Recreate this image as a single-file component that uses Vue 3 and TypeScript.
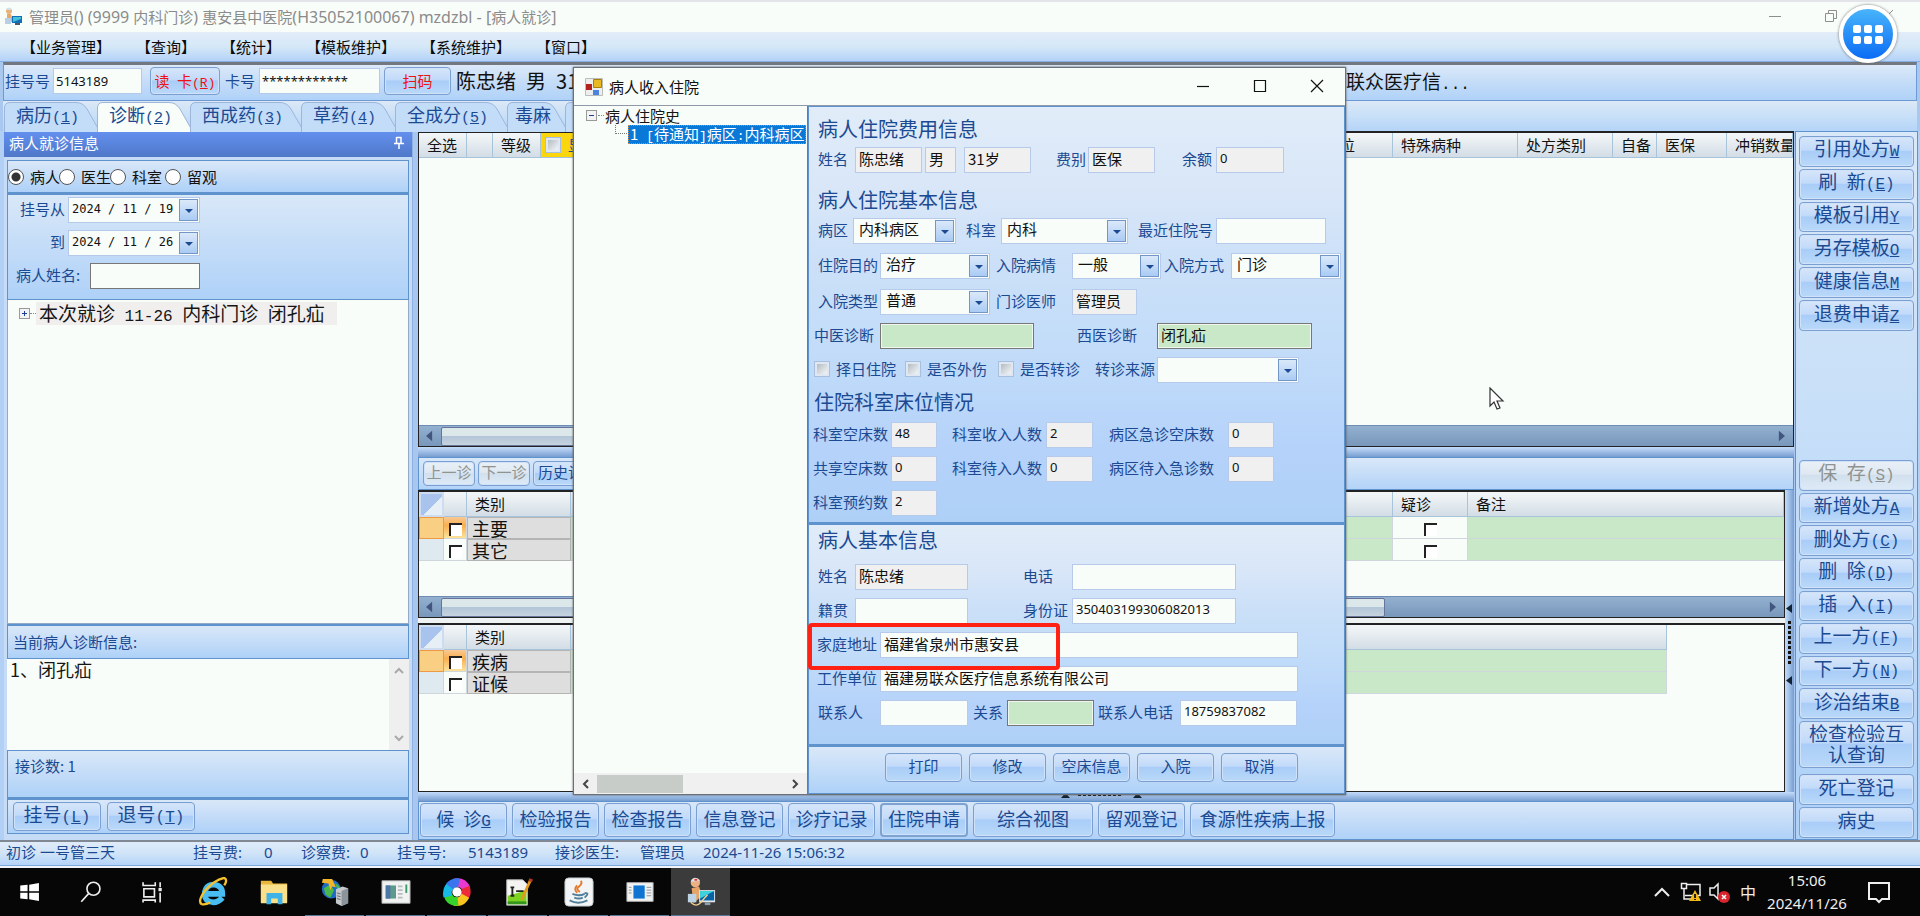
<script setup lang="ts">
import { ref } from 'vue'

interface KeyLabel { text: string; key?: string; paren?: boolean; disabled?: boolean; wide?: string }

const menus = ['业务管理', '查询', '统计', '模板维护', '系统维护', '窗口']

const tabs = [
  { text: '病历', key: '1', w: 98 },
  { text: '诊断', key: '2', w: 98 },
  { text: '西成药', key: '3', w: 116 },
  { text: '草药', key: '4', w: 99 },
  { text: '全成分', key: '5', w: 117 },
  { text: '毒麻', key: '', w: 63 },
  { text: '', key: '', w: 98 },
]
const activeTab = ref(1)
const tabPath = (w: number) =>
  `M0.5 31V7Q0.5 1.5 6 1.5H${w - 26}Q${w - 19} 1.5 ${w - 15} 8L${w - 2} 31`

const scopes = ['病人', '医生', '科室', '留观']
const scope = ref('病人')

const topActions: KeyLabel[] = [
  { text: '引用处方', key: 'W' },
  { text: '刷\u2002新', key: 'E', paren: true },
  { text: '模板引用', key: 'Y' },
  { text: '另存模板', key: 'O' },
  { text: '健康信息', key: 'M' },
  { text: '退费申请', key: 'Z' },
]
const midActions: KeyLabel[] = [
  { text: '保\u2002存', key: 'S', paren: true, disabled: true },
  { text: '新增处方', key: 'A' },
  { text: '删处方', key: 'C', paren: true },
  { text: '删\u2002除', key: 'D', paren: true },
  { text: '插\u2002入', key: 'I', paren: true },
  { text: '上一方', key: 'F', paren: true },
  { text: '下一方', key: 'N', paren: true },
  { text: '诊治结束', key: 'B' },
]
const bottomActions: KeyLabel[] = [
  { text: '候\u2002诊', key: 'G' },
  { text: '检验报告' },
  { text: '检查报告' },
  { text: '信息登记' },
  { text: '诊疗记录' },
  { text: '住院申请', wide: 'pressed' },
  { text: '综合视图', wide: 'w-mid' },
  { text: '留观登记' },
  { text: '食源性疾病上报', wide: 'w-long' },
]
const diagRows = ['主要', '其它']
const tcmRows = ['疾病', '证候']
const dialogActions = ['打印', '修改', '空床信息', '入院', '取消']
</script>

<template>
  <div class="screen">
    <header class="titlebar">
      <svg class="app-icon" viewBox="0 0 20 20" aria-hidden="true">
        <circle cx="6" cy="4" r="3" fill="#e9b27a" /><path d="M3 3Q6-2 9 3z" fill="#cfe0ee" />
        <path d="M4 7h4l2 7-6 3z" fill="#e8a868" /><path d="M2 11h6v6H2z" fill="#b9cfe4" />
        <path d="M9 9h10v7H9z" fill="#0f6fb8" /><path d="M10 10h8v2l-8 3z" fill="#45c0d8" /><path d="M12 16h5v2h-5z" fill="#4a5a68" />
      </svg>
      <h1>管理员<span>() (9999 </span>内科门诊<span>) </span>惠安县中医院<span>(H35052100067) mzdzbl - [</span>病人就诊<span>]</span></h1>
      <div class="win-btns">
        <button aria-label="最小化"><svg viewBox="0 0 14 14"><path d="M1 7.500h12" /></svg></button>
        <button aria-label="还原"><svg viewBox="0 0 14 14"><path d="M1.500 4.500h8v8h-8zM4.500 4V1.500h8v8H10" /></svg></button>
        <button aria-label="关闭"><svg viewBox="0 0 14 14"><path d="M1 1l12 12M13 1L1 13" /></svg></button>
      </div>
    </header>

    <nav class="menubar">
      <button v-for="m in menus" :key="m">【{{ m }}】</button>
    </nav>

    <section class="patient-bar">
      <label for="regno">挂号号</label>
      <input id="regno" class="num regno" value="5143189" />
      <button class="btn red read">读&ensp;卡<span class="k">(<u>R</u>)</span></button>
      <label for="cardno">卡号</label>
      <input id="cardno" class="num cardno" value="************" />
      <button class="btn red scan">扫码</button>
      <span class="pt-name">陈忠绪&ensp;男&ensp;31岁</span>
      <span class="pt-org">联众医疗信<span class="k">...</span></span>
    </section>

    <div class="tabbar" role="tablist">
      <button v-for="(t, i) in tabs" :key="i" role="tab" :aria-selected="activeTab === i"
        :class="['tab', { on: activeTab === i }]" :style="{ width: t.w + 'px' }" @click="activeTab = i">
        <svg :width="t.w" height="31" aria-hidden="true"><path :d="tabPath(t.w)" /></svg>
        <span>{{ t.text }}<span v-if="t.key" class="k">(<u>{{ t.key }}</u>)</span></span>
      </button>
    </div>

    <main class="work">
      <aside class="dock">
        <div class="dock-head"><span>病人就诊信息</span>
          <svg viewBox="0 0 10 14" aria-hidden="true"><path d="M2.500 1v6M7 1v6M2.500 1.500h5M0 7.500h10M5 8v5" /></svg>
        </div>
        <div class="dock-body">
          <div class="scope pane">
            <label v-for="s in scopes" :key="s"><input v-model="scope" type="radio" name="scope" :value="s" /> {{ s }}</label>
          </div>
          <div class="filter pane">
            <label for="d1">挂号从</label><span class="date"><input id="d1" value="2024 / 11 / 19" /><button aria-label="选择日期" class="drop"></button></span>
            <label for="d2">到</label><span class="date"><input id="d2" value="2024 / 11 / 26" /><button aria-label="选择日期" class="drop"></button></span>
            <label for="pname">病人姓名:</label><input id="pname" class="pname" />
          </div>
          <div class="tree">
            <div class="node"><i class="twist plus"></i><i class="dots"></i><span class="node-text">本次就诊<span class="k">&nbsp;11-26&nbsp;</span>内科门诊<span class="k">&nbsp;</span>闭孔疝</span></div>
          </div>
          <label class="pane diag-label" for="diag">当前病人诊断信息:</label>
          <div class="diag-box">
            <textarea id="diag">1、闭孔疝</textarea>
            <div class="vbar"><svg viewBox="0 0 10 8"><path d="M1 6l4-4 4 4" /></svg><svg viewBox="0 0 10 8"><path d="M1 2l4 4 4-4" /></svg></div>
          </div>
          <div class="pane count">接诊数: 1</div>
          <div class="pane dock-btns">
            <button class="btn">挂号<span class="k">(<u>L</u>)</span></button>
            <button class="btn">退号<span class="k">(<u>T</u>)</span></button>
          </div>
        </div>
      </aside>

      <section class="center">
        <div class="grid1 grid-box">
          <table>
            <colgroup><col class="c48" /><col class="c26" /><col class="c48" /><col class="c100" /><col /><col class="c61" /><col class="c125" /><col class="c95" /><col class="c44" /><col class="c70" /><col class="c66" /></colgroup>
            <thead><tr><th>全选</th><th></th><th>等级</th><th class="yellow"><label><input type="checkbox" class="soft" />显示</label></th><th></th><th>位</th><th>特殊病种</th><th>处方类别</th><th>自备</th><th>医保</th><th>冲销数量</th></tr></thead>
          </table>
          <div class="fill"></div>
          <div class="hbar"><svg class="arr" viewBox="0 0 8 12"><path d="M7 0v12L0 6z" /></svg><i class="thumb t1"></i><b></b><svg class="arr" viewBox="0 0 8 12"><path d="M1 0v12l7-6z" /></svg></div>
        </div>
        <div class="hsplit"></div>
        <div class="toolstrip">
          <button class="btn small" disabled>上一诊</button>
          <button class="btn small" disabled>下一诊</button>
          <button class="btn small hist">历史诊断</button>
        </div>
        <div class="lower">
          <div class="stack">
            <div class="grid2 grid-box">
              <table>
                <colgroup><col class="c25" /><col class="c23" /><col class="c104" /><col /><col class="c75" /><col class="c316" /></colgroup>
                <thead><tr><th class="corner"></th><th></th><th>类别</th><th></th><th>疑诊</th><th>备注</th></tr></thead>
                <tbody>
                  <tr v-for="(r, i) in diagRows" :key="r" :class="{ cur: i === 0 }">
                    <td class="ind"></td><td class="ck"><input type="checkbox" class="sunk" :aria-label="r" /></td>
                    <td class="cat">{{ r }}</td><td class="green"></td>
                    <td class="mid"><input type="checkbox" class="sunk" aria-label="疑诊" /></td><td class="green"></td>
                  </tr>
                </tbody>
              </table>
              <div class="fill"></div>
              <div class="hbar"><svg class="arr" viewBox="0 0 8 12"><path d="M7 0v12L0 6z" /></svg><i class="thumb t2"></i><svg class="arr right" viewBox="0 0 8 12"><path d="M1 0v12l7-6z" /></svg></div>
            </div>
            <div class="grid3 grid-box">
              <table>
                <colgroup><col class="c25" /><col class="c23" /><col class="c104" /><col /></colgroup>
                <thead><tr><th class="corner"></th><th></th><th>类别</th><th></th></tr></thead>
                <tbody>
                  <tr v-for="(r, i) in tcmRows" :key="r" :class="{ cur: i === 0 }">
                    <td class="ind"></td><td class="ck"><input type="checkbox" class="sunk" :aria-label="r" /></td>
                    <td class="cat">{{ r }}</td><td class="green"></td>
                  </tr>
                </tbody>
              </table>
              <div class="fill"></div>
            </div>
          </div>
          <div class="vsplit"><svg viewBox="0 0 8 84"><path d="M7 3v9L1 7.500zM7 75v9L1 79.500z" /><path class="dot" d="M4.500 20v44" /></svg></div>
        </div>
        <div class="hsplit low"><svg viewBox="0 0 84 8"><path d="M3 6h9L7.500 1zM75 6h9L79.500 1z" /><path class="dot" d="M20 2.500h44" /></svg></div>
        <div class="actions">
          <button v-for="a in bottomActions" :key="a.text" :class="['btn', a.wide]">{{ a.text }}<span v-if="a.key" class="k"><u>{{ a.key }}</u></span></button>
        </div>
      </section>

      <aside class="side">
        <div class="side-group six">
          <button v-for="a in topActions" :key="a.text" class="btn">{{ a.text }}<span class="k"><template v-if="a.paren">(</template><u>{{ a.key }}</u><template v-if="a.paren">)</template></span></button>
        </div>
        <div class="side-gap"></div>
        <div class="side-group eight">
          <button v-for="a in midActions" :key="a.text" class="btn" :disabled="a.disabled">{{ a.text }}<span class="k"><template v-if="a.paren">(</template><u>{{ a.key }}</u><template v-if="a.paren">)</template></span></button>
        </div>
        <button class="btn tall">检查检验互认查询</button>
        <button class="btn last">死亡登记</button>
        <button class="btn last">病史</button>
      </aside>
    </main>

    <footer class="status">
      <span class="s1">初诊 一号管三天</span><span class="s2">挂号费:</span><span class="s3">0</span><span class="s4">诊察费:</span><span class="s5">0</span>
      <span class="s6">挂号号:</span><span class="s7">5143189</span><span class="s8">接诊医生:</span><span class="s9">管理员</span><span>2024-11-26 15:06:32</span>
    </footer>

    <div class="taskbar">
      <button class="tb" aria-label="开始"><svg viewBox="0 0 32 32"><path fill="#fff" d="M4 8l9-1v8H4zM15 7l12-2v10H15zM4 17h9v8l-9-1zM15 17h12v10l-12-2z" /></svg></button>
      <button class="tb" aria-label="搜索"><svg viewBox="0 0 32 32"><g fill="none" stroke="#eee" stroke-width="2"><circle cx="19" cy="12" r="8" /><path d="M13 18l-9 10" /></g></svg></button>
      <button class="tb" aria-label="任务视图"><svg viewBox="0 0 32 32"><path fill="none" stroke="#eee" stroke-width="2" d="M5 4v4h15V4M6 12h13v10H6zM5 29v-3h15v3M26 4v6M26 17v12" /><path fill="#eee" d="M24 11h4v4h-4z" /></svg></button>
      <button class="tb" aria-label="Internet Explorer"><svg viewBox="0 0 32 32"><path fill="none" stroke="#49bdf2" stroke-width="6" d="M26 22Q22 27 16 27Q7 26 7 18Q8 8 17 8Q26 9 26 18H10" /><path fill="none" stroke="#f5c22e" stroke-width="2.500" d="M4 29Q-1 26 8 14Q18 3 28 1Q32 3 28 9M4 29q4 1 9-2" /></svg></button>
      <button class="tb" aria-label="文件资源管理器"><svg viewBox="0 0 32 32"><path fill="#e9b53c" d="M2 4h11l2 3h15v20H2z" /><path fill="#fbe08b" d="M2 8h28v20H2z" /><path fill="#3fb2e8" d="M8 17h17v12h-5v-6h-7v6H8z" /></svg></button>
      <button class="tb run" aria-label="网络服务"><svg viewBox="0 0 32 32"><circle cx="12" cy="13" r="10" fill="#1f6bc4" /><path fill="#4cb749" d="M4 12l7-4 4 6-4 8-5-3zM16 6l5 4-2 5z" /><path fill="#f3b52a" d="M3 2h10l4 9-4-1-2 4-2-7-7-1z" /><path fill="#c3c9cd" d="M17 13l7-3 6 2v16l-7 3-6-3z" /><path fill="#8b949b" d="M23 15l7-3v16l-7 3z" /><path stroke="#666" d="M18 17l4 1M18 20l4 1M18 23l4 1" /></svg></button>
      <button class="tb run" aria-label="配置工具"><svg viewBox="0 0 32 32"><path fill="#f1f3f3" stroke="#aaa" d="M1 4h30v24H1z" /><path fill="#5d9a8c" d="M5 9h11v14H5z" /><path fill="#4b78a8" d="M5 9h5v14H5z" /><path stroke="#b8bcc0" stroke-width="2" d="M18 10h5M18 14h5M18 18h5M18 22h5" /><path stroke="#3a9b63" stroke-width="2" d="M27 8v9" /></svg></button>
      <button class="tb run" aria-label="浏览器"><svg viewBox="0 0 32 32"><g fill="none" stroke-width="9"><path stroke="#e83ad0" d="M14 6q9-1 12 7" /><path stroke="#ee2a3a" d="M25 11q3 7-3 12" /><path stroke="#f7c51e" d="M25 20q-4 8-12 6" /><path stroke="#35d32b" d="M17 26q-9 1-11-8" /><path stroke="#17b9e6" d="M6 21Q4 12 12 7" /><path stroke="#3a74ee" d="M8 10q4-5 10-4" /></g><circle cx="16" cy="16" r="5" fill="#fff" /></svg></button>
      <button class="tb run" aria-label="文本编辑"><svg viewBox="0 0 32 32"><path fill="#f4f4f0" stroke="#bbb" d="M4 3h17l5 5v22H4z" /><path fill="#7ed321" d="M5 20l20-6v15H5z" /><path fill="#34961d" d="M5 26h20v3H5z" /><path stroke="#222" stroke-width="2" d="M10 10v10M8 11h4M8 20h4M14 15h8" /><path stroke="#e59b1c" stroke-width="3" d="M29 4l-9 20" /><path stroke="#b83a1e" stroke-width="4" d="M30 2l-1 3" /></svg></button>
      <button class="tb run" aria-label="Java"><svg viewBox="0 0 32 32"><rect x="1" y="1" width="30" height="30" rx="4" fill="#f2f4f5" stroke="#bcc6cc" /><path fill="none" stroke="#e8792b" stroke-width="2" d="M18 4q2 3-2 6t1 6M14 9q-4 4 0 8" /><path fill="none" stroke="#4f7f9c" stroke-width="2" d="M9 18q7 3 13 0M11 22q5 2 9 0M6 25q9 5 19 0M22 17q6 0 0 5" /></svg></button>
      <button class="tb run" aria-label="程序窗口"><svg viewBox="0 0 32 32"><path fill="#f1f3f3" stroke="#aaa" d="M2 6h28v20H2z" /><path fill="#0e75d3" d="M9 9h12v14H9z" /><path stroke="#8a9094" d="M4 11h3M4 14h3M4 17h3M23 11h5M23 14h5M23 17h5M23 20h5" /></svg></button>
      <button class="tb run current" aria-label="病人就诊"><svg viewBox="0 0 32 32"><circle cx="10" cy="6" r="5" fill="#eab184" /><path fill="#d9e7f2" d="M5 5Q9-3 15 4z" /><path fill="#e2372c" d="M9 2h3v2H9z" /><path fill="#e7a468" d="M6 12l8-2 3 10-9 8z" /><path fill="#bcd3e6" d="M2 18h9v9H2z" /><path fill="#dfe6ea" d="M14 14h17v13H14z" /><path fill="#0763a6" d="M15 15h15v10H15z" /><path fill="#3fd1dc" d="M15 15h15L15 23z" /><path fill="#909da6" d="M20 27h6v3h-6z" /><path fill="none" stroke="#f0cf8e" stroke-width="1.500" d="M5 27q6 6 11 0t7-8" /></svg></button>
      <span class="grow"></span>
      <div class="tray">
        <svg class="t-up" viewBox="0 0 16 16"><path d="M1 12l7-7 7 7" fill="none" stroke="#eee" stroke-width="2" /></svg>
        <svg class="t-net" viewBox="0 0 22 22"><path d="M7 3.500h13v11H5M1.500 2.500h5v5h-5zM4 8v10h7" fill="none" stroke="#eee" stroke-width="1.500" /><path d="M15 9l6 11H9z" fill="#f6b91a" /><path d="M15 13v4M15 18v1" stroke="#222" stroke-width="2" /></svg>
        <svg class="t-vol" viewBox="0 0 22 22"><path d="M1 7h4l4-4v15l-4-4H1z" fill="none" stroke="#eee" stroke-width="1.500" /><circle cx="15" cy="16" r="6" fill="#d8242c" /><path d="M13 14l4 4M17 14l-4 4" stroke="#fff" stroke-width="1.500" /></svg>
        <span class="ime">中</span>
        <span class="clock">15:06<br />2024/11/26</span>
        <svg class="t-msg" viewBox="0 0 24 24"><path d="M2 3h20v16h-7l-3 3-3-3H2z" fill="none" stroke="#eee" stroke-width="2" /></svg>
      </div>
    </div>

    <section class="dialog" role="dialog" aria-label="病人收入住院">
      <header class="dlg-title">
        <svg class="dlg-icon" viewBox="0 0 18 18" aria-hidden="true"><path fill="#eee" stroke="#bbb" d="M.5.5h17v17H.5z" /><path fill="#e8b920" stroke="#a8820a" d="M8.500 1.500h8v8h-8z" /><path fill="#b3211c" d="M1 6h6v6H1z" /><path fill="#4a86e0" d="M8 12h6v5H8z" /></svg>
        <h2>病人收入住院</h2>
        <div class="dlg-btns">
          <button aria-label="最小化"><svg viewBox="0 0 14 14"><path d="M1 7.500h12" /></svg></button>
          <button aria-label="最大化"><svg viewBox="0 0 14 14"><path d="M1.500 1.500h11v11h-11z" /></svg></button>
          <button aria-label="关闭"><svg viewBox="0 0 14 14"><path d="M1 1l12 12M13 1L1 13" /></svg></button>
        </div>
      </header>
      <div class="dlg-body">
        <div class="dlg-tree">
          <div class="node"><i class="twist"></i><i class="dots"></i><span>病人住院史</span></div>
          <div class="leaf"><i class="elbow"></i><span class="leaf-text">1<span class="k">&nbsp;[</span>待通知<span class="k">]</span>病区<span class="k">:</span>内科病区</span></div>
          <div class="fill"></div>
          <div class="dlg-hbar"><svg viewBox="0 0 8 10"><path d="M6 1L2 5l4 4" /></svg><i></i><b></b><svg viewBox="0 0 8 10"><path d="M2 1l4 4-4 4" /></svg></div>
        </div>
        <form class="form" @submit.prevent>
          <div class="sheet s-top">
            <h3>病人住院费用信息</h3>
            <div class="row r-cost"><label for="f1">姓名</label><input id="f1" class="ro" readonly value="陈忠绪" /><input class="ro c4" readonly aria-label="性别" value="男" /><input class="ro c6" readonly aria-label="年龄" value="31岁" /><label for="f2" class="c8">费别</label><input id="f2" class="ro" readonly value="医保" /><label for="f3" class="c11">余额</label><input id="f3" class="ro num" readonly value="0" /></div>
            <h3 class="second">病人住院基本信息</h3>
            <div class="row r-ward"><label for="f4">病区</label><span class="sel"><select id="f4"><option>内科病区</option></select><i class="drop"></i></span><label for="f5" class="c4">科室</label><span class="sel"><select id="f5"><option>内科</option></select><i class="drop"></i></span><label for="f6" class="c7">最近住院号</label><input id="f6" /></div>
            <div class="row r-aim"><label for="f7">住院目的</label><span class="sel"><select id="f7"><option>治疗</option></select><i class="drop"></i></span><label for="f8" class="c4">入院病情</label><span class="sel"><select id="f8"><option>一般</option></select><i class="drop"></i></span><label for="f9" class="c7">入院方式</label><span class="sel"><select id="f9"><option>门诊</option></select><i class="drop"></i></span></div>
            <div class="row r-type"><label for="f10">入院类型</label><span class="sel"><select id="f10"><option>普通</option></select><i class="drop"></i></span><label for="f11" class="c4">门诊医师</label><input id="f11" class="ro" readonly value="管理员" /></div>
            <div class="row r-diag"><label for="f12">中医诊断</label><input id="f12" class="grn" /><label for="f13" class="c4">西医诊断</label><input id="f13" class="grn" value="闭孔疝" /></div>
            <div class="row r-flag"><label class="chk"><input type="checkbox" class="soft" />择日住院</label><label class="chk"><input type="checkbox" class="soft" />是否外伤</label><label class="chk"><input type="checkbox" class="soft" />是否转诊</label><label for="f14">转诊来源</label><span class="sel"><select id="f14"><option></option></select><i class="drop"></i></span></div>
            <h3 class="third">住院科室床位情况</h3>
            <div class="row r-bed"><label for="b1">科室空床数</label><input id="b1" class="ro num" readonly value="48" /><label for="b2" class="c4">科室收入人数</label><input id="b2" class="ro num" readonly value="2" /><label for="b3" class="c7">病区急诊空床数</label><input id="b3" class="ro num" readonly value="0" /></div>
            <div class="row r-bed"><label for="b4">共享空床数</label><input id="b4" class="ro num" readonly value="0" /><label for="b5" class="c4">科室待入人数</label><input id="b5" class="ro num" readonly value="0" /><label for="b6" class="c7">病区待入急诊数</label><input id="b6" class="ro num" readonly value="0" /></div>
            <div class="row r-bed"><label for="b7">科室预约数</label><input id="b7" class="ro num" readonly value="2" /></div>
          </div>
          <div class="sheet s-mid">
            <h3>病人基本信息</h3>
            <div class="row r-name"><label for="p1">姓名</label><input id="p1" class="ro" readonly value="陈忠绪" /><label for="p2" class="c4">电话</label><input id="p2" class="num" /></div>
            <div class="row r-name"><label for="p3">籍贯</label><input id="p3" /><label for="p4" class="c4">身份证</label><input id="p4" class="num" value="350403199306082013" /></div>
            <div class="row r-addr"><label for="p5">家庭地址</label><input id="p5" value="福建省泉州市惠安县" /><i class="mark"></i></div>
            <div class="row r-addr"><label for="p6">工作单位</label><input id="p6" value="福建易联众医疗信息系统有限公司" /></div>
            <div class="row r-link"><label for="p7">联系人</label><input id="p7" /><label for="p8" class="c4">关系</label><input id="p8" class="grn" /><label for="p9" class="c7">联系人电话</label><input id="p9" class="num" value="18759837082" /></div>
          </div>
          <div class="sheet s-btns">
            <button v-for="d in dialogActions" :key="d" type="button" class="btn">{{ d }}</button>
          </div>
        </form>
      </div>
    </section>

    <svg class="pointer" viewBox="0 0 16 24" aria-hidden="true"><path d="M1 1v18l4-4 3 7 3-1-3-7h6z" fill="#fff" stroke="#333" stroke-width="1.200" /></svg>
    <button class="bubble" aria-label="工具"><svg viewBox="0 0 50 50"><g fill="#fff"><rect v-for="n in 6" :key="n" :x="10 + ((n - 1) % 3) * 11" :y="n > 3 ? 27 : 16" width="8" height="8" rx="2" /></g></svg></button>
  </div>
</template>

<style>
body { margin: 0; background: #000; }
</style>

<style scoped>
.screen { --ink: #1b4a92; --paper: #f8fdf9; --line: #5f93ce; position: relative; display: flex; flex-direction: column; min-height: 100vh; box-sizing: border-box; background: #a9c8f0; color: var(--ink); font: 15px/20px "Noto Sans CJK SC", sans-serif; overflow: hidden; }
.screen *, .screen *::before, .screen *::after { box-sizing: border-box; }
button, input, select, textarea { font: inherit; color: inherit; margin: 0; }
button { padding: 0; border: 0; background: none; white-space: nowrap; }
h1, h2, h3 { margin: 0; font-weight: 400; }
i { font-style: normal; }
.k { font-family: "Liberation Mono", monospace; font-size: 16px; line-height: 16px; white-space: pre; }

.titlebar { flex: none; height: 32px; display: flex; align-items: center; padding-left: 3px; background: #f9fdf9; border-top: 2px solid #e3e3ea; }
.app-icon { width: 20px; height: 20px; margin-right: 6px; }
.titlebar h1 { flex: 1; font: 15px/24px "Noto Sans CJK SC", sans-serif; color: #8b8b8b; }
.titlebar h1 span { font: 16px/24px "Noto Sans", sans-serif; white-space: pre; }
.win-btns { display: flex; padding-right: 5px; }
.win-btns button { width: 56px; height: 28px; }
.win-btns svg { width: 14px; height: 14px; fill: none; stroke: #8e8e8e; }

.menubar { flex: none; height: 30px; display: flex; gap: 25px; padding-left: 21px; background: linear-gradient(#e3ecf9, #d5e8f8 50%, #b4d2f8); color: #0b0b0b; border-bottom: 1px solid #87aee0; }
.patient-bar { flex: none; height: 39px; margin: 0 3px; display: flex; align-items: center; padding: 0 1px 3px; background: linear-gradient(#dce9f9, #c4dcf8 50%, #b0d2f8); border: 1px solid #6d9ad4; border-top: 3px solid #73777f; }
.patient-bar input { height: 26px; border: 1px solid #b5caea; background: var(--paper); padding: 0 2px; color: #111; outline: 0; }
.regno { width: 89px; margin: 0 8px 0 3px; }
.cardno { width: 121px; margin: 0 4px; }
.num { font-family: "Noto Sans", sans-serif !important; font-size: 13px !important; }
.btn { height: 28px; border: 1px solid #7a9fd0; border-radius: 4px; color: var(--ink); background: linear-gradient(#d6e6f9, #c2dafa 45%, #a9cdf8 50%, #bad9f9); box-shadow: inset 0 0 0 1px #cfe2fa; font-size: 19px; }
.btn:disabled { color: #8f9491; background: linear-gradient(#e9f0f7, #dfe8f2 45%, #d2e0ee 50%, #deeaf6); }
.btn.red { color: #f01212; font-size: 15px; }
.btn.red .k { font-size: 13px; }
.read { width: 70px; margin-right: 5px; }
.scan { width: 67px; }
.pt-name { font-size: 20px; line-height: 30px; color: #111; }
.pt-org { font-size: 19px; line-height: 30px; color: #111; }
.pt-name { width: 895px; padding-left: 5px; }

.tabbar { flex: none; height: 30px; margin: 0 3px; display: flex; background: linear-gradient(#dce8f6, #c8e0f8 50%, #b4d4f8); padding-left: 1px; }
.tab { position: relative; flex: none; height: 30px; margin-right: -5px; font-size: 18px; line-height: 24px; padding: 0 0 4px 12px; text-align: left; color: var(--ink); }
.tab .k { font-size: 15px; }
.tab svg { position: absolute; left: 0; top: 0; fill: #c3dcf8; stroke: #9db6da; }
.tab > span { position: relative; }
.tab.on svg { fill: var(--paper); }
.tab:nth-child(6) { padding-left: 8px; }

.work { flex: 1; min-height: 0; display: flex; padding: 0 2px 0 4px; background: #b2cff6; }
.dock { width: 409px; display: flex; flex-direction: column; border-right: 1px solid #8eb1e2; }
.dock-head { height: 26px; display: flex; align-items: center; justify-content: space-between; padding: 0 8px 3px 5px; background: linear-gradient(#6490f0, #4f78c8); color: #fff; }
.dock-head svg { width: 10px; height: 14px; fill: none; stroke: #fff; stroke-width: 1.500; }
.dock-body { flex: 1; display: flex; flex-direction: column; padding: 3px 3px 6px; background: #c6dbf6; }
.pane { border: 1px solid var(--line); background: linear-gradient(#d9e8f8, #c4dcf8 50%, #aed1f8); }
.scope { height: 33px; display: flex; align-items: center; color: #111; }
.scope label { display: flex; align-items: center; gap: 6px; width: 51px; white-space: nowrap; }
.scope label:nth-child(3) { width: 55px; }
.scope input { appearance: none; flex: none; width: 16px; height: 16px; border: 1px solid #555; border-radius: 50%; background: #fff; }
.scope input:checked { background: radial-gradient(circle, #333 0 4px, #fff 5px); }
.filter { height: 107px; display: grid; grid-template-columns: 57px auto; grid-template-rows: 26px 26px 26px; justify-content: start; align-items: center; padding: 2px 0; row-gap: 7px; column-gap: 3px; border-top: 2px solid var(--line); }
.filter label { text-align: right; white-space: nowrap; padding-bottom: 2px; }
.date { display: flex; align-items: center; width: 132px; height: 26px; border: 1px solid #b5caea; background: var(--paper); padding-right: 1px; }
.date input { width: 110px; border: 0; padding: 0 0 3px 3px; background: none; font: 12px/20px "DejaVu Sans Mono", monospace; color: #111; outline: 0; }
.drop { flex: none; position: relative; width: 19px; height: 22px; border: 1px solid #7296c8; background: linear-gradient(#dbe9fa, #aacbf4); }
.drop::after { content: ""; position: absolute; left: 5px; top: 9px; border: 4px solid transparent; border-top-color: var(--ink); border-bottom: 0; }
.filter label:nth-of-type(3) { width: 80px; text-align: left; padding-left: 8px; }
.filter .pname { width: 110px; height: 26px; margin-left: 22px; border: 1px solid #777; background: var(--paper); }
.tree { flex: 1; background: var(--paper); padding: 2px 0 0 11px; border: 1px solid #93a9c8; border-top: 0; }
.node { display: flex; align-items: center; height: 22px; color: #151515; }
.twist { position: relative; width: 11px; height: 11px; border: 1px solid #999; background: #f3f3f3; }
.twist::before, .twist.plus::after { content: ""; position: absolute; left: 2px; top: 4px; width: 5px; height: 1px; background: #1f3f98; }
.twist.plus::after { transform: rotate(90deg); }
.dots { width: 6px; border-top: 1px dotted #888; }
.node-text { background: #f1eeee; font-size: 19px; line-height: 22px; padding: 0 12px 0 3px; white-space: nowrap; }
.diag-label { height: 35px; padding: 6px 0 0 5px; border-top: 2px solid var(--line); }
.diag-box { height: 91px; display: flex; background: var(--paper); }
.diag-box textarea { flex: 1; resize: none; border: 0; background: none; padding: 0 3px; font: 18px/20px "Noto Sans CJK SC", sans-serif; color: #151515; outline: 0; }
.vbar { width: 20px; display: flex; flex-direction: column; justify-content: space-between; align-items: center; padding: 8px 0; background: #efefef; }
.vbar svg { width: 10px; height: 8px; fill: none; stroke: #aaa; stroke-width: 2; }
.count { height: 48px; padding: 5px 0 0 7px; }
.dock-btns { height: 36px; display: flex; gap: 6px; padding: 2px 5px; border-top: 2px solid var(--line); }
.dock-btns .btn { width: 88px; height: 29px; line-height: 22px; padding-bottom: 4px; }

.center { flex: 1; min-width: 0; display: flex; flex-direction: column; padding: 0 1px 0 5px; background: #a9c6f0; }
.grid-box { display: flex; flex-direction: column; border: 1px solid #222; border-top-width: 2px; background: var(--paper); overflow: hidden; }
.grid1 { height: 316px; }
table { width: 100%; table-layout: fixed; border-collapse: separate; border-spacing: 0; color: #111; }
th { height: 25px; padding: 0 0 0 8px; font-weight: 400; text-align: left; line-height: 22px; white-space: nowrap; overflow: hidden; background: linear-gradient(#f4f7f8, #d3dde6); border-right: 1px solid #a8c4da; border-bottom: 1px solid #a8c4da; }
.c23 { width: 23px; } .c25 { width: 25px; } .c26 { width: 26px; } .c44 { width: 44px; } .c48 { width: 48px; } .c61 { width: 61px; } .c66 { width: 66px; } .c70 { width: 70px; } .c75 { width: 75px; } .c95 { width: 95px; } .c100 { width: 100px; } .c104 { width: 104px; } .c125 { width: 125px; } .c316 { width: 316px; }
th.yellow { background: #fbd60c; color: var(--ink); padding-left: 4px; }
th.yellow label { display: flex; align-items: center; gap: 7px; }
.soft { appearance: none; flex: none; width: 16px; height: 16px; border: 3px solid #dfe8f2; outline: 1px solid #a9bfdc; outline-offset: -1px; background: linear-gradient(135deg, #b3bcc4, #f3f5f5); }
.fill { flex: 1; }
.hbar { height: 21px; display: flex; align-items: center; padding: 0 8px 0 7px; background: linear-gradient(#93b0d0, #7897ba); border-top: 1px solid #6f8db3; }
.arr { flex: none; width: 7px; height: 12px; fill: #41557f; }
.hbar b { flex: 1; }
.hbar .right { margin-left: auto; }
.thumb { height: 19px; margin-left: 8px; border: 1px solid #67749b; border-radius: 2px; background: linear-gradient(#dce7ea 45%, #b3c5d8 50%, #c6d3df); }
.t1 { width: 600px; }
.t2 { width: 944px; }
.hsplit { flex: none; height: 10px; background: linear-gradient(#c5dcfa, #769dd0); }
.hsplit.low { height: 9px; }
.hsplit.low svg { display: block; width: 84px; height: 8px; margin-left: 640px; fill: #123; }
.dot { stroke: #111; stroke-width: 3; stroke-dasharray: 3 2; fill: none; }
.toolstrip { height: 33px; display: flex; gap: 3px; align-items: center; padding: 0 4px; background: linear-gradient(#d9e8f8, #b3d3f8); border: 1px solid var(--line); }
.btn.small { width: 52px; height: 25px; font-size: 15px; line-height: 18px; padding-bottom: 3px; }
.btn.hist { width: 70px; }
.lower { flex: 1; min-height: 0; display: flex; }
.stack { flex: 1; min-width: 0; display: flex; flex-direction: column; background: #eef2f2; gap: 5px; }
.grid2 { height: 128px; }
.grid3 { flex: 1; }
.grid3 table { width: calc(100% - 117px); }
.vsplit { width: 9px; display: flex; background: linear-gradient(90deg, #c5dcfa, #769dd0); }
.vsplit svg { width: 8px; height: 84px; margin-top: 111px; fill: #123; }
td { height: 22px; padding: 0; line-height: 18px; border-bottom: 1px solid #cfd6dc; border-right: 1px solid #cfd6dc; }
.corner { background: linear-gradient(135deg, #a8c4ee 55%, #e6eef6 56%); border: 2px solid #cddcf0; }
.ind { background: #dfeaf0; }
.cur .ind { background: #f9d083; border: 1px solid #ee9a45; }
.cur .ck { background: linear-gradient(#f9c994, #f9ae50 40%, #fbe39a); }
.ck, .mid { text-align: center; }
.cat { background: #dedede; border: 1px solid #b4b4b4; padding-left: 4px; font-size: 18px; }
.green { background: #c9e8c8; }
.sunk { appearance: none; width: 13px; height: 13px; border: 0 solid #222; border-width: 2px 0 0 2px; background: #fff; vertical-align: middle; }
.actions { height: 39px; display: flex; gap: 5px; padding: 1px 1px 2px; background: linear-gradient(#d9e8f8, #b0d1f8); border: 1px solid var(--line); }
.actions .btn { width: 87px; height: 34px; line-height: 24px; padding-bottom: 5px; font-size: 18px; }
.actions .pressed { border-width: 2px; border-color: #7fa3d0; width: 88px; }
.actions .w-mid { width: 120px; }
.actions .w-long { width: 145px; }

.side { width: 123px; display: flex; flex-direction: column; padding: 4px 3px 1px; background: linear-gradient(#d8e8f8, #aed1f8); border: 1px solid var(--line); }
.side-group { display: flex; flex-direction: column; gap: 2px; }
.side-group .btn { flex: 1 1 0; min-height: 0; height: auto; line-height: 22px; padding-bottom: 5px; }
.six { height: 195px; }
.eight { height: 259px; }
.side-gap { flex: 1; }
.tall { height: 47px; margin: 2px 0 4px; white-space: normal; line-height: 21px; padding: 0 8px 4px; flex: none; }
.last { height: 31px; margin-top: 2px; line-height: 22px; padding-bottom: 5px; flex: none; }

.status { flex: none; height: 26px; display: flex; align-items: center; padding: 0 0 4px 6px; background: linear-gradient(#dfebf9, #d0e4f8 50%, #b4d2f8); border-top: 2px solid #808893; border-bottom: 1px solid #7da9e0; font-family: "Noto Sans", "Noto Sans CJK SC", sans-serif; font-size: 15px; }
.status span { white-space: nowrap; }
.s1 { width: 187px; } .s2 { width: 71px; } .s3 { width: 37px; } .s4 { width: 59px; } .s5 { width: 37px; } .s6 { width: 71px; } .s7 { width: 87px; } .s8 { width: 85px; } .s9 { width: 63px; }

.taskbar { flex: none; height: 50px; display: flex; background: #060606; border-top: 2px solid #f0f4f8; color: #eee; }
.tb { flex: none; width: 59px; margin-right: 2px; height: 48px; display: flex; align-items: center; justify-content: center; }
.tb:nth-child(-n+3) svg { width: 26px; height: 26px; }
.tb svg { width: 30px; height: 30px; }
.run { padding-top: 1px; border-bottom: 1px solid #56789a; }
.current { background: #3b3b3b; }
.grow { flex: 1; }
.tray { display: flex; align-items: center; padding-right: 29px; }
.t-up { width: 16px; height: 16px; margin-right: 10px; }
.t-net { width: 22px; height: 22px; margin-right: 7px; }
.t-vol { width: 22px; height: 22px; margin-right: 9px; }
.ime { font-size: 16px; margin-right: 8px; }
.clock { width: 86px; text-align: center; font: 15px/23px "Noto Sans", sans-serif; margin-right: 17px; }
.t-msg { width: 24px; height: 24px; }

.dialog { position: absolute; left: 573px; top: 67px; width: 773px; display: flex; flex-direction: column; border: 1px solid #6c7077; background: var(--paper); box-shadow: 0 0 2px #555; }
.dlg-title { height: 37px; display: flex; align-items: center; padding-left: 11px; color: #111; }
.dlg-icon { width: 18px; height: 18px; margin-right: 6px; }
.dlg-title h2 { flex: 1; font-size: 15px; line-height: 20px; }
.dlg-btns { display: flex; }
.dlg-btns button { width: 57px; height: 32px; }
.dlg-btns svg { width: 14px; height: 14px; fill: none; stroke: #111; stroke-width: 1.200; }
.dlg-body { display: flex; border-top: 1px solid #8f99a8; }
.dlg-tree { width: 233px; display: flex; flex-direction: column; background: var(--paper); }
.dlg-tree .node { height: 19px; padding-left: 12px; gap: 1px; }
.leaf { display: flex; height: 19px; padding-left: 41px; }
.elbow { width: 12px; height: 9px; border-left: 1px dotted #777; border-bottom: 1px dotted #777; margin-right: 1px; flex: none; }
.leaf-text { flex: 1; overflow: hidden; white-space: nowrap; background: #0a78d6; color: #fff; padding-left: 1px; line-height: 16px; border: 1px dotted #d98642; margin-right: 1px; }
.leaf .k { font-size: 13px; }
.dlg-hbar { height: 21px; display: flex; align-items: center; padding: 0 8px; background: #f0f0f0; }
.dlg-hbar svg { width: 8px; height: 10px; fill: none; stroke: #444; stroke-width: 2; }
.dlg-hbar i { width: 86px; height: 18px; margin-left: 7px; background: #c8ccc8; }
.dlg-hbar b { flex: 1; }
.form { flex: 1; border-left: 1px solid #75797f; }
.sheet { border: 1px solid var(--line); background: linear-gradient(#e1ecf8, #d6e5f8 25%, #cde1f8 35%, #c0dbf9 62%, #b5d2fa 82%, #aed0f7); padding-left: 9px; }
.s-top { height: 417px; padding-top: 11px; }
.s-mid { height: 222px; padding-top: 4px; border-top-width: 2px; }
.s-btns { height: 49px; display: flex; gap: 7px; padding: 6px 46px 0 0; justify-content: flex-end; border-top-width: 2px; background: linear-gradient(#dae8f8, #aed1f8); }
.s-btns .btn { width: 77px; height: 29px; font-size: 15px; line-height: 20px; padding-bottom: 3px; }
h3 { font-size: 20px; line-height: 22px; }
.second { margin-top: 16px; }
.third { margin: 8px 0 0 -4px; }
.row { display: grid; height: 26px; align-items: center; margin-top: 10px; position: relative; }
.row label { white-space: nowrap; line-height: 24px; padding-bottom: 2px; }
.row input:not([type="checkbox"]), .sel { width: 100%; height: 26px; border: 1px solid #b7caea; background: var(--paper); color: #111; padding: 0 3px 4px; outline: 0; line-height: 20px; }
.row .ro { background: #f0f0f0 !important; }
.row .grn { background: #c9e8c8 !important; border: 1px solid #777 !important; box-shadow: inset 0 0 0 1px #eef8ee; }
.row .sel { display: flex; align-items: center; padding: 0 1px 0 0; }
.sel select { flex: 1; min-width: 0; appearance: none; border: 0; background: none; padding: 0 0 4px 5px; color: #111; outline: 0; }
.r-cost { grid-template-columns: 37px 67px 3px 31px 8px 67px 25px 32px 67px 27px 34px 68px; margin-top: 7px; }
.r-ward { grid-template-columns: 35px 103px 10px 35px 127px 10px 78px 110px; margin-top: 7px; }
.r-aim { grid-template-columns: 62px 110px 6px 76px 89px 3px 67px 110px; margin-top: 9px; }
.r-type { grid-template-columns: 62px 110px 6px 76px 65px; }
.r-diag { grid-template-columns: 66px 154px 43px 80px 155px; margin: 8px 0 0 -4px; }
.r-flag { grid-template-columns: 91px 93px 97px 62px 142px; margin: 8px 0 0 -4px; }
.chk { display: flex; align-items: center; gap: 6px; }
.r-bed { grid-template-columns: 78px 46px 15px 94px 47px 16px 119px 46px; margin: 8px 0 0 -5px; }
.third + .r-bed { margin-top: 9px; }
.r-name { grid-template-columns: 37px 113px 55px 49px 164px; margin-top: 8px; }
.r-addr { grid-template-columns: 63px 418px; margin: 8px 0 0 -1px; }
.r-link { grid-template-columns: 62px 88px 5px 34px 87px 4px 82px 117px; margin-top: 8px; }
.s-mid h3 + .row { margin-top: 13px; }
.c4 { grid-column: 4; } .c6 { grid-column: 6; } .c7 { grid-column: 7; } .c8 { grid-column: 8; } .c11 { grid-column: 11; }
.mark { position: absolute; left: -9px; top: -9px; width: 252px; height: 47px; border: 4px solid #ff2214; border-radius: 4px; z-index: 2; pointer-events: none; }

.pointer { position: absolute; left: 1489px; top: 387px; width: 16px; height: 24px; }
.bubble { position: absolute; right: 23px; top: 5px; width: 58px; height: 58px; border: 4px solid #fff; border-radius: 50%; background: linear-gradient(#48b4fb, #0b6cf4); box-shadow: 0 0 3px #666; }
.bubble svg { display: block; width: 50px; height: 50px; }
</style>
